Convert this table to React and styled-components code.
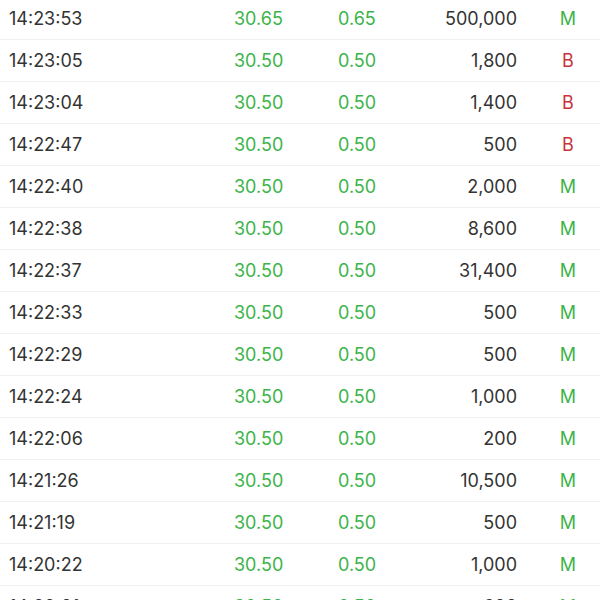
import React from "react";
import styled, { createGlobalStyle } from "styled-components";

const GlobalStyle = createGlobalStyle`
  html, body {
    margin: 0;
    padding: 0;
    background: #ffffff;
    overflow: hidden;
  }
`;

const List = styled.div`
  width: 600px;
  height: 600px;
  overflow: hidden;
  font-family: Inter, "Liberation Sans", sans-serif;
  font-size: 18px;
  color: #333333;
`;

const Rows = styled.div`
  margin-top: -2px;
`;

const Row = styled.div`
  display: grid;
  grid-template-columns: 225px 104px 105px 74px 102px;
  align-items: center;
  height: 41px;
  padding-left: 9px;
  border-bottom: 1px solid #f1f1f1;
`;

const Time = styled.span`
  color: #333333;
`;

const Num = styled.span`
  color: #3db449;
`;

const Volume = styled.span`
  text-align: right;
  color: #333333;
`;

const Side = styled.span`
  text-align: center;
  color: ${(p) => (p.$side === "B" ? "#c8343d" : "#3db449")};
`;

const trades = [
  ["14:23:53", "30.65", "0.65", "500,000", "M"],
  ["14:23:05", "30.50", "0.50", "1,800", "B"],
  ["14:23:04", "30.50", "0.50", "1,400", "B"],
  ["14:22:47", "30.50", "0.50", "500", "B"],
  ["14:22:40", "30.50", "0.50", "2,000", "M"],
  ["14:22:38", "30.50", "0.50", "8,600", "M"],
  ["14:22:37", "30.50", "0.50", "31,400", "M"],
  ["14:22:33", "30.50", "0.50", "500", "M"],
  ["14:22:29", "30.50", "0.50", "500", "M"],
  ["14:22:24", "30.50", "0.50", "1,000", "M"],
  ["14:22:06", "30.50", "0.50", "200", "M"],
  ["14:21:26", "30.50", "0.50", "10,500", "M"],
  ["14:21:19", "30.50", "0.50", "500", "M"],
  ["14:20:22", "30.50", "0.50", "1,000", "M"],
  ["14:20:01", "30.50", "0.50", "600", "M"],
];

const App = () => {
  return (
    <List>
      <GlobalStyle />
      <Rows>
        {trades.map(([time, price, change, vol, side], i) => (
          <Row key={i}>
            <Time>{time}</Time>
            <Num>{price}</Num>
            <Num>{change}</Num>
            <Volume>{vol}</Volume>
            <Side $side={side}>{side}</Side>
          </Row>
        ))}
      </Rows>
    </List>
  );
};

export default App;
